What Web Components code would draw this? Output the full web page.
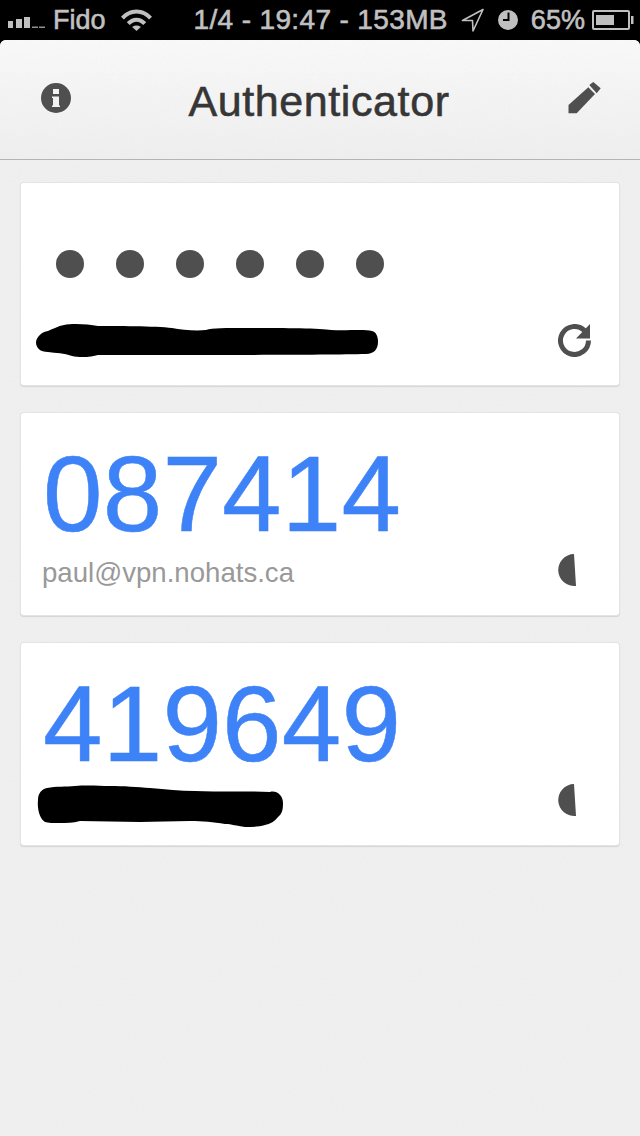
<!DOCTYPE html>
<html>
<head>
<meta charset="utf-8">
<title>Authenticator</title>
<style>
html,body{margin:0;padding:0;background:#000;}
body{font-family:"Liberation Sans",Arial,sans-serif;width:640px;height:1136px;overflow:hidden;display:flex;flex-direction:column;}
</style>
</head>
<body>
<status-bar></status-bar>
<app-shell>
  <token-card code="••••••" hidden-code>
    <blob-mark slot="account" w="342" h="33" d="M0 18C1 12 6 8 12 7C17 5 22 2 28 1C36 -1 52 0 62 2C78 2 120 2 136 4C146 6 160 7 170 6C176 4 190 4 210 4C240 4 285 4 295 6C310 7 328 5 336 7C340 8 342 12 342 18C342 25 338 30 330 30C290 31 170 31 100 31C84 31 70 31 62 31C56 33 44 34 36 32C28 29 20 29 12 28C4 28 0 24 0 18Z"></blob-mark>
    <icon-refresh slot="icon"></icon-refresh>
  </token-card>
  <token-card code="087414">
    <span slot="account" style="padding-top:6px">paul@vpn.nohats.ca</span>
    <icon-pie slot="icon"></icon-pie>
  </token-card>
  <token-card code="419649">
    <blob-mark slot="account" style="margin-left:-4px;margin-top:13px" w="245" h="41" d="M0 14C0 7 4 3 9 2C18 0 28 1 37 0C50 -1 62 0 72 0C85 0 100 1 112 2C128 3 142 5 157 5C180 6 210 5 232 6C238 4 245 9 245 17C245 24 244 28 240 31C236 36 232 38 227 39C220 41 214 41 207 41C198 40 194 38 187 38C175 36 165 35 152 35C135 35 118 36 102 36C82 36 62 35 42 35C35 37 28 37 22 37C15 37 10 37 7 36C2 33 -1 24 0 14Z"></blob-mark>
    <icon-pie slot="icon"></icon-pie>
  </token-card>
</app-shell>

<script>
const NOISE = `url("data:image/svg+xml,%3Csvg xmlns='http://www.w3.org/2000/svg' width='200' height='200'%3E%3Cfilter id='n'%3E%3CfeTurbulence type='fractalNoise' baseFrequency='.8' numOctaves='2'/%3E%3CfeColorMatrix values='0 0 0 0 .5 0 0 0 0 .5 0 0 0 0 .5 0 0 0 .09 0'/%3E%3C/filter%3E%3Crect width='200' height='200' filter='url(%23n)'/%3E%3C/svg%3E")`;

class StatusBar extends HTMLElement {
    constructor() {
        super();
        this.attachShadow({mode:'open'});
        this.shadowRoot.innerHTML = `
        <style>
        :host{
            display:flex;
            align-items:center;
            height:40px;
            flex:none;
            background:#000;
            color:#c0c0c0;
            font:27px "Liberation Sans",Arial,sans-serif;
            -webkit-text-stroke:.6px #c0c0c0;
            padding-left:8px;
            box-sizing:border-box;
            white-space:nowrap;
        }
        svg{display:block;flex:none;fill:#c0c0c0;}
        .time{margin-left:42px;font-size:28px;letter-spacing:.36px;}
        </style>
        <svg width="38" height="12" viewBox="0 0 38 12" style="margin-top:4px">
            <rect x="0" y="5" width="5" height="7"/>
            <rect x="8" y="3" width="6" height="9"/>
            <rect x="16" y="1" width="6" height="11"/>
            <rect x="24" y="10.500" width="6" height="1.500" opacity=".75"/>
            <rect x="31" y="10.500" width="6" height="1.500" opacity=".75"/>
        </svg>
        <span style="margin-left:7px">Fido</span>
        <svg width="31" height="22" viewBox="0 0 32 24" preserveAspectRatio="none" style="margin-left:15px">
            <path d="M0 8.500C4 3.500 10 .5 16 .5S28 3.500 32 8.500L29 11.500C25.500 7.500 21 5 16 5S6.500 7.500 3 11.500Z"/>
            <path d="M6 14.500C8.500 11.500 12 9.500 16 9.500S23.500 11.500 26 14.500L23 17.500C21 15.500 18.700 14 16 14S11 15.500 9 17.500Z"/>
            <path d="M16 24L11.500 19.500C13 18.500 14.500 18 16 18S19 18.500 20.500 19.500Z"/>
        </svg>
        <span class="time">1/4 - 19:47 - 153MB</span>
        <svg width="24" height="24" viewBox="0 0 24 24" style="margin-left:13px">
            <path d="M22 1.500L1.500 12.500H11.500L12 23Z" fill="none" stroke="#c0c0c0" stroke-width="1.600" stroke-linejoin="round"/>
        </svg>
        <svg width="20" height="20" viewBox="0 0 20 20" style="margin-left:13px">
            <path fill-rule="evenodd" d="M10 0A10 10 0 1 1 10 20A10 10 0 1 1 10 0ZM9.500 2.500V9H5V11H11.500V2.500Z"/>
        </svg>
        <span style="margin-left:13px">65%</span>
        <svg width="42" height="20" viewBox="0 0 42 20" style="margin-left:7px">
            <path fill-rule="evenodd" d="M2 0H36A2 2 0 0 1 38 2V18A2 2 0 0 1 36 20H2A2 2 0 0 1 0 18V2A2 2 0 0 1 2 0ZM2 2V18H36V2Z"/>
            <rect x="4" y="5" width="18" height="10"/>
            <rect x="39" y="6" width="2.500" height="8"/>
        </svg>
        `;
    }
}
customElements.define('status-bar',StatusBar)

class AppShell extends HTMLElement {
    constructor() {
        super();
        this.attachShadow({mode:'open'});
        this.shadowRoot.innerHTML = `
        <style>
        :host{
            display:flex;
            flex-direction:column;
            flex:1;
            background:${NOISE},#f1f1f1;
            border-radius:6px 6px 0 0;
            overflow:hidden;
        }
        header{
            flex:none;
            height:120px;
            box-sizing:border-box;
            border-bottom:1px solid #b4b4b4;
            background:${NOISE},linear-gradient(#fbfbfb,#f0f0f0);
            display:flex;
            align-items:center;
            justify-content:space-between;
            padding:0 39px 4px 41px;
        }
        h1{
            margin:7px 0 0 -1px;
            font:400 43px "Liberation Sans",Arial,sans-serif;
            letter-spacing:.6px;
            color:#363636;
            -webkit-text-stroke:.6px #363636;
        }
        svg{display:block;fill:#4f4f4f;}
        main{
            display:flex;
            flex-direction:column;
            gap:28px;
            padding:23px 21px 0 21px;
        }
        </style>
        <header>
            <svg width="30" height="30" viewBox="0 0 30 30">
                <path fill-rule="evenodd" d="M15 0A15 15 0 1 1 15 30A15 15 0 1 1 15 0ZM12 6V11H18V6ZM11 13.500V15H12V22.500H11V24H19V22.500H18V13.500Z"/>
            </svg>
            <h1>Authenticator</h1>
            <svg width="33" height="32" viewBox="0 0 33 32">
                <path d="M21.300 3L25.300 0L32.700 6.300L28.700 11.300Z"/>
                <path d="M20.300 5.300L27 12L8.700 31.300H.5V23Z"/>
            </svg>
        </header>
        <main><slot></slot></main>
        `;
    }
}
customElements.define('app-shell',AppShell)

class TokenCard extends HTMLElement {
    constructor() {
        super();
        this.attachShadow({mode:'open'});
        const code = this.getAttribute('code');
        const inner = this.hasAttribute('hidden-code')
            ? `<div class="dots">${[...code].map(() => '<i></i>').join('')}</div>`
            : `<div class="code">${code}</div>`;
        this.shadowRoot.innerHTML = `
        <style>
        :host{
            display:flex;
            flex-direction:column;
            height:202px;
            box-sizing:border-box;
            background:#fff;
            border-radius:3px;
            box-shadow:0 0 0 1px #e4e4e4,0 1px 1px 1px #d4d4d4;
            padding:27px 28px 0 21px;
            color:#999;
        }
        .code{
            height:108px;
            margin-left:1px;
            font:107px/108px "Liberation Sans",Arial,sans-serif;
            letter-spacing:.2px;
            color:#3e82f7;
            -webkit-text-stroke:.5px #3e82f7;
        }
        .dots{
            height:108px;
            display:flex;
            gap:32px;
            padding:40px 0 0 14px;
            box-sizing:border-box;
        }
        .dots i{
            display:block;
            width:28px;
            height:28px;
            border-radius:50%;
            background:#4f4f4f;
        }
        .foot{
            margin-top:6px;
            height:32px;
            display:flex;
            align-items:center;
            justify-content:space-between;
            font:27.6px "Liberation Sans",Arial,sans-serif;
        }
        </style>
        ${inner}
        <div class="foot">
            <slot name="account"></slot>
            <slot name="icon"></slot>
        </div>
        `;
    }
}
customElements.define('token-card',TokenCard)

// black scribble over an account name
class BlobMark extends HTMLElement {
    constructor() {
        super();
        this.attachShadow({mode:'open'});
        const w = this.getAttribute('w'), h = this.getAttribute('h');
        this.shadowRoot.innerHTML = `
        <style>
        :host{display:block;margin-left:-6px;}
        svg{display:block;overflow:visible;}
        </style>
        <svg width="${w}" height="${h}" viewBox="0 0 ${w} ${h}"><path d="${this.getAttribute('d')}" fill="#000"/></svg>
        `;
    }
}
customElements.define('blob-mark',BlobMark)

class IconRefresh extends HTMLElement {
    constructor() {
        super();
        this.attachShadow({mode:'open'});
        this.shadowRoot.innerHTML = `
        <style>:host{display:block;width:33px;height:33px;} svg{display:block;}</style>
        <svg width="33" height="33" viewBox="0 0 33 33">
            <path d="M26.400 6.600A14 14 0 1 0 30.500 16.500" fill="none" stroke="#4f4f4f" stroke-width="5"/>
            <path d="M32 0V14.500H18Z" fill="#4f4f4f"/>
        </svg>
        `;
    }
}
customElements.define('icon-refresh',IconRefresh)

class IconPie extends HTMLElement {
    constructor() {
        super();
        this.attachShadow({mode:'open'});
        this.shadowRoot.innerHTML = `
        <style>:host{display:block;width:33px;height:33px;} svg{display:block;}</style>
        <svg width="33" height="33" viewBox="0 0 33 33">
            <path d="M16 0A16 16 0 1 0 18 31.900Z" fill="#4f4f4f"/>
        </svg>
        `;
    }
}
customElements.define('icon-pie',IconPie)
</script>
</body>
</html>
